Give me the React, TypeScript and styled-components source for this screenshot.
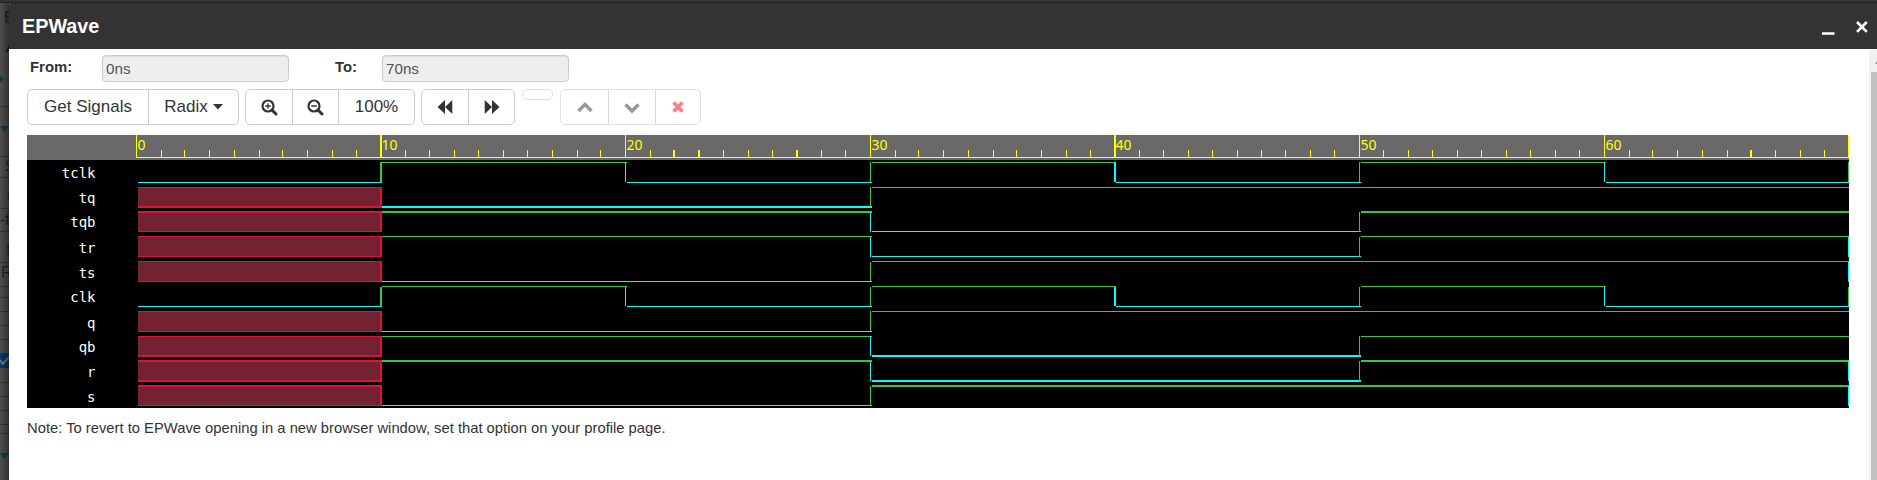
import React from 'react';
import styled, { createGlobalStyle } from 'styled-components';

const Global = createGlobalStyle`
  *{box-sizing:border-box}
  body{margin:0;height:480px;overflow:hidden;background:#4a4a4a;font-family:"Liberation Sans",Arial,sans-serif;color:#333}
`;
const Page = styled.div`display:grid;grid-template-columns:9px 1fr;grid-template-rows:3px 477px;width:1877px;height:480px;`;
const Strip = styled.div`grid-column:1/-1;background:#333;border-bottom:1px solid #222;`;
const Backdrop = styled.svg`width:9px;height:477px;display:block;`;
const Dialog = styled.section`background:#fff;display:flex;flex-direction:column;border-top-left-radius:3px;overflow:hidden;`;
const TitleBar = styled.header`height:46px;flex:none;background:#333;color:#fff;display:flex;align-items:center;justify-content:space-between;padding:0 8px 0 13px;border-top:1px solid #303030;`;
const Title = styled.h1`margin:0 0 2px;font-size:19.8px;line-height:24px;font-weight:700;`;
const WindowButtons = styled.svg`width:50px;height:44px;`;
const Body = styled.div`flex:1;display:flex;min-height:0;`;
const Content = styled.main`width:1860px;padding:6px 0 0 18px;`;
const Scroll = styled.svg`width:8px;height:431px;`;
const Fields = styled.div`display:flex;height:27px;`;
const Label = styled.label<{ $w: number; $indent: number }>`width:${p => p.$w}px;font-size:14.9px;font-weight:700;line-height:25px;padding-left:${p => p.$indent}px;`;
const Field = styled.div`width:187px;height:27px;border:1px solid #ccc;border-radius:4px;background:#eee;box-shadow:inset 0 1px 1px rgba(0,0,0,.075);font-size:15.2px;line-height:26px;padding-left:3px;color:#555;`;
const Toolbar = styled.div`display:flex;align-items:flex-start;margin-top:7px;height:36px;`;
const Button = styled.button<{ $w: number }>`width:${p => p.$w}px;height:34px;border:0;background:none;padding:0;color:#333;font:17px "Liberation Sans",Arial,sans-serif;display:flex;align-items:center;justify-content:center;gap:5px;`;
const Group = styled.div<{ $gap: number; $faded?: boolean }>`
  display:flex;height:36px;margin-right:${p => p.$gap}px;border-radius:5px;
  border:1px solid ${p => p.$faded ? '#e1e1e1' : '#ccc'};
  && > ${Button} + ${Button}{border-left:1px solid ${p => p.$faded ? '#d8d8d8' : '#ccc'}}
`;
const EmptyPill = styled.div`width:31px;height:11px;border:1px solid #e1e1e1;border-radius:5px;margin-right:7px;`;
const Wave = styled.svg`display:block;margin-top:10px;width:1822px;height:273px;`;
const Note = styled.p`margin:10px 0 0;font-size:14.77px;line-height:20px;`;

const Zoomer = ({ plus }: { plus?: boolean }) => (
  <svg width="17" height="17" viewBox="0 0 17 17" fill="none" stroke="#333">
    <circle cx="7" cy="7" r="5.5" strokeWidth="2.2" /><path d="M11 11L15 15" strokeWidth="3" strokeLinecap="round" />
    <path d={plus ? 'M4.2 7H9.8M7 4.2V9.8' : 'M4.2 7H9.8'} strokeWidth="1.3" />
  </svg>
);
const Skip = ({ back }: { back?: boolean }) => (
  <svg width="16" height="16" viewBox="0 0 16 16" fill="#333">
    <path d={back ? 'M8 1V15L.5 8ZM15.3 1V15L8 8Z' : 'M.7 1V15L8 8ZM8 1V15L15.5 8Z'} />
  </svg>
);
const Mark = ({ d, color = '#999', w = 3.5 }: { d: string; color?: string; w?: number }) => (
  <svg width="16" height="16" viewBox="0 0 16 16"><path d={d} fill="none" stroke={color} strokeWidth={w} /></svg>
);

const GREEN = '#32cd32', CYAN = '#00ffff', RED = '#dc143c';
const edge = [109, 353, 598, 843, 1087, 1332, 1577, 1821];
const ticks = [
  134, 157, 182, 207, 232, 255, 280, 305, 329,
  378, 402, 427, 451, 476, 500, 525, 550, 573,
  623, 646, 671, 696, 721, 745, 769, 794, 818,
  868, 891, 916, 941, 966, 989, 1014, 1039, 1063,
  1112, 1136, 1161, 1185, 1210, 1234, 1258, 1283, 1307,
  1356, 1381, 1405, 1430, 1454, 1479, 1503, 1528, 1552,
  1602, 1625, 1650, 1675, 1700, 1723, 1748, 1773, 1797,
];
const boldTicks = [646, 671, 769, 1723];
// One character per 10ns interval; the last one is the level reached at 70ns.
type Signal = { name: string; levels: string; base: number; top: number; bottom: number; rise: [number, number]; hiW?: number; loW?: number };
const signals: Signal[] = [
  { name: 'tclk', levels: '01010101', base: 43, top: 27, bottom: 47, rise: [27, 47] },
  { name: 'tq', levels: 'x0011111', base: 68, top: 52, bottom: 71, rise: [52, 72], loW: 2 },
  { name: 'tqb', levels: 'x1100111', base: 92, top: 76, bottom: 96, rise: [77, 97], hiW: 2 },
  { name: 'tr', levels: 'x1100110', base: 118, top: 101, bottom: 121, rise: [102, 122] },
  { name: 'ts', levels: 'x0011110', base: 143, top: 126, bottom: 146, rise: [127, 147] },
  { name: 'clk', levels: '01010101', base: 167, top: 151, bottom: 171, rise: [152, 171] },
  { name: 'q', levels: 'x0011111', base: 193, top: 176, bottom: 196, rise: [176, 196] },
  { name: 'qb', levels: 'x1100111', base: 217, top: 201, bottom: 220, rise: [201, 221], loW: 2 },
  { name: 'r', levels: 'x1100110', base: 242, top: 225, bottom: 245, rise: [226, 246], hiW: 2, loW: 2 },
  { name: 's', levels: 'x0011110', base: 267, top: 250, bottom: 270, rise: [251, 271], hiW: 2 },
];
const wide = (i: number) => (i === 1 || i === 4 ? 2 : 1);

const Trace = ({ s }: { s: Signal }) => {
  const { levels, top, bottom, rise, hiW = 1, loW = 1 } = s;
  return (
    <g shapeRendering="crispEdges">
      {levels.slice(0, 7).split('').map((v, i) => {
        const from = i === 0 ? 111 : edge[i] + 2;
        const w = Math.min(edge[i + 1] + 2, 1822) - from;
        if (v === 'x') return (
          <g key={i}>
            <rect x={from} y={top} width={w} height={bottom - top + loW} fill="#732232" />
            <rect x={from} y={top} width={w} height={hiW} fill={RED} />
            <rect x={from} y={bottom} width={w} height={loW} fill={RED} />
          </g>
        );
        return <rect key={i} x={from} y={v === '1' ? top : bottom} width={w} height={v === '1' ? hiW : loW} fill={v === '1' ? GREEN : CYAN} />;
      })}
      {levels.slice(1).split('').map((v, i) => {
        if (v === levels[i]) return null;
        const unknown = levels[i] === 'x';
        const y0 = unknown ? top : rise[0];
        const y1 = unknown ? bottom + loW : rise[1];
        return <rect key={i} x={edge[i + 1]} y={y0} width={wide(i + 1)} height={y1 - y0} fill={unknown ? RED : v === '1' ? GREEN : CYAN} />;
      })}
    </g>
  );
};

export default function App() {
  return (
    <>
      <Global />
      <Page>
        <Strip />
        <Backdrop viewBox="0 0 9 477">
          <defs><linearGradient id="shade"><stop offset="0" stopColor="#000" stopOpacity="0" /><stop offset="1" stopColor="#000" stopOpacity=".4" /></linearGradient></defs>
          <rect width="9" height="477" fill="#505050" />
          <path d="M0 103.5H9M0 153.5H9M0 174.5H9M0 205.5H9M0 228.5H9M0 259.5H9M0 283.5H9M0 294.5H9M0 308.5H9M0 322.5H9M0 336.5H9M0 379.5H9M0 393.5H9M0 407.5H9M0 421.5H9M0 430.5H9" stroke="#383838" />
          <path d="M9 42V49H5Z" fill="#1b2436" />
          <path d="M0 72L4 76L0 80ZM0 123H9L4 129ZM0 450H9L4 456Z" fill="#173c50" />
          <rect y="350" width="9" height="15" fill="#0a3970" /><path d="M0 357L3 361L9 354" fill="none" stroke="#777" strokeWidth="2" />
          <g fill="#252525" fontSize="16" fontFamily="Liberation Sans, sans-serif"><text x="4" y="20" fill="#1b2436">E</text><text x="5" y="169">S</text><text x="7" y="199">C</text><text x="0" y="222">-t</text><text x="6" y="252">I</text><text x="1" y="275">R</text></g>
          <rect width="9" height="477" fill="url(#shade)" />
        </Backdrop>
        <Dialog>
          <TitleBar>
            <Title>EPWave</Title>
            <WindowButtons viewBox="0 0 50 44"><path d="M3 28.5H15.5" stroke="#fff" strokeWidth="2.6" /><path d="M38 17L47.8 26.8M47.8 17L38 26.8" stroke="#fff" strokeWidth="2.6" /></WindowButtons>
          </TitleBar>
          <Body>
            <Content>
              <Fields>
                <Label $w={75} $indent={3}>From:</Label><Field>0ns</Field>
                <Label $w={93} $indent={46}>To:</Label><Field>70ns</Field>
              </Fields>
              <Toolbar>
                <Group $gap={6}><Button $w={120}>Get Signals</Button><Button $w={90}>Radix <svg width="10" height="6"><path d="M0 0H10L5 5.5Z" fill="#333" /></svg></Button></Group>
                <Group $gap={6}><Button $w={46}><Zoomer plus /></Button><Button $w={46}><Zoomer /></Button><Button $w={76}>100%</Button></Group>
                <Group $gap={7}><Button $w={46}><Skip back /></Button><Button $w={46}><Skip /></Button></Group>
                <EmptyPill />
                <Group $gap={0} $faded><Button $w={47}><Mark d="M1.5 12L8 5.5L14.5 12" /></Button><Button $w={47}><Mark d="M1.5 5.5L8 12L14.5 5.5" /></Button><Button $w={45}><Mark d="M3.5 3.5L12.5 12.5M12.5 3.5L3.5 12.5" color="#ff8080" w={3.8} /></Button></Group>
              </Toolbar>
              <Wave viewBox="0 0 1822 273">
                <rect width="1822" height="273" fill="#000" />
                <rect width="1822" height="25" fill="#696969" />
                <g fill="#ff0" shapeRendering="crispEdges">
                  <rect x="109" y="22" width="1713" height="1" />
                  {edge.map((x, i) => <rect key={x} x={x} y="0" width={wide(i)} height="23" />)}
                  {ticks.map(x => <rect key={x} x={x} y="15" width={boldTicks.includes(x) ? 2 : 1} height="7" />)}
                </g>
                <g fontFamily="Noto Sans, sans-serif" fontSize="14" fill="#ff0">
                  {edge.slice(0, 7).map((x, i) => <text key={x} x={x + 1.5} y="15">{i * 10}</text>)}
                </g>
                <g fontFamily="DejaVu Sans Mono, monospace" fontSize="14" fill="#fff" textAnchor="end">
                  {signals.map(s => <text key={s.name} x="68.5" y={s.base}>{s.name}</text>)}
                </g>
                {signals.map(s => <Trace key={s.name} s={s} />)}
              </Wave>
              <Note>Note: To revert to EPWave opening in a new browser window, set that option on your profile page.</Note>
            </Content>
            <Scroll viewBox="0 0 8 431"><rect width="8" height="431" fill="#f1f1f1" /><rect x="2" y="23" width="6" height="408" fill="#c1c1c1" /><path d="M6 15L8 12V15Z" fill="#888" /></Scroll>
          </Body>
        </Dialog>
      </Page>
    </>
  );
}
